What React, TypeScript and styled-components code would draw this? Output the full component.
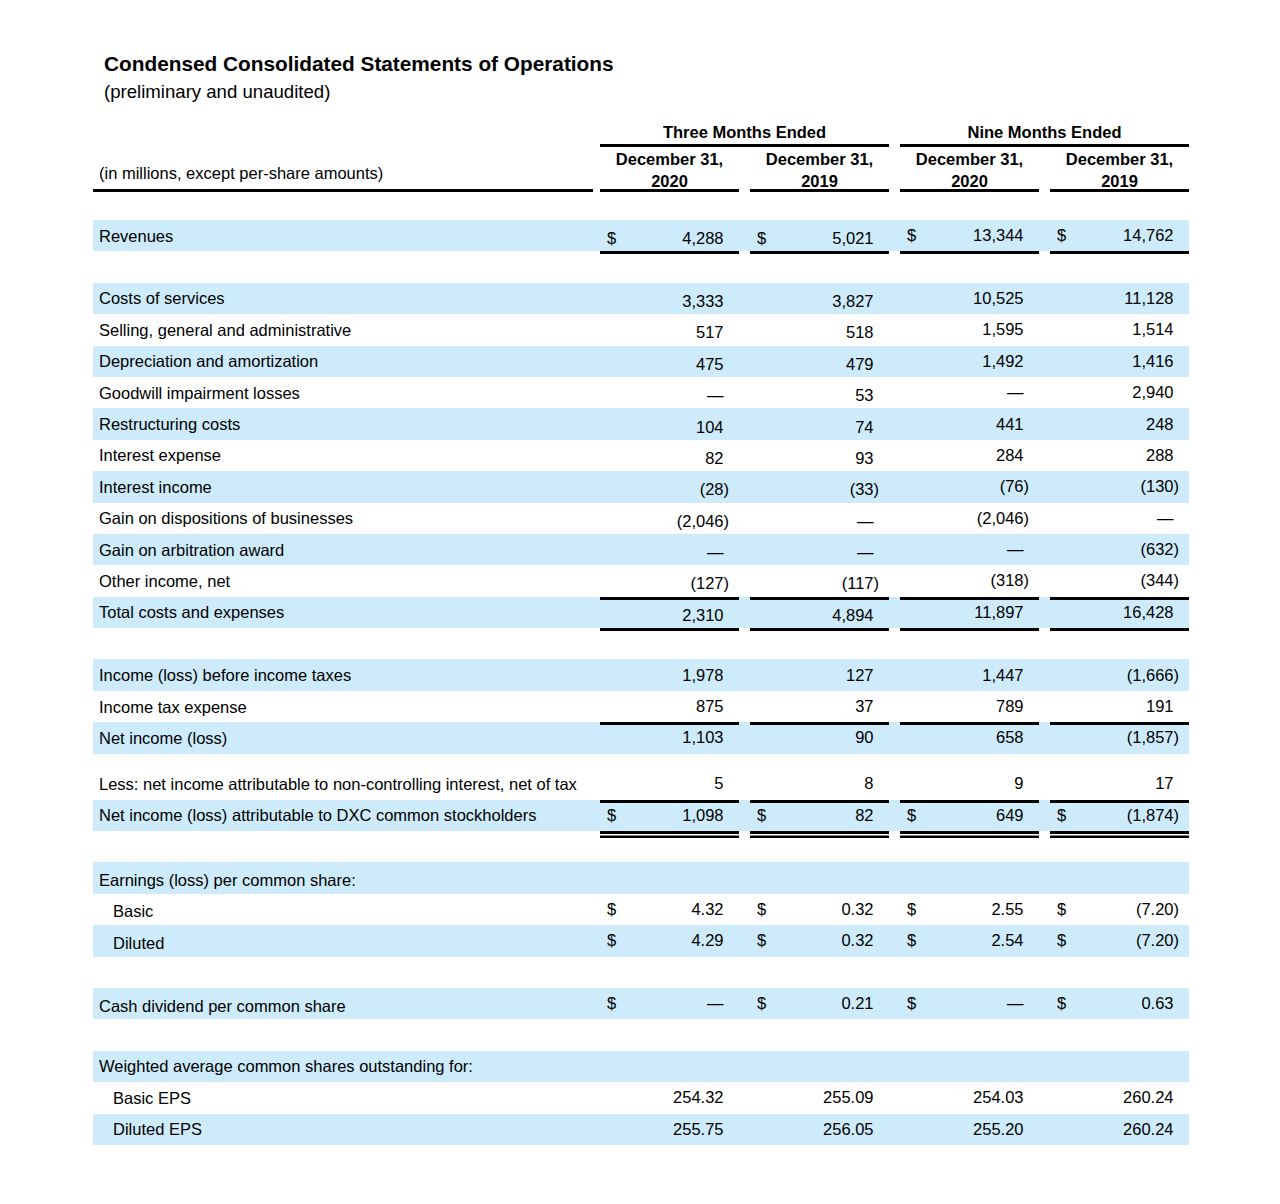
import React from 'react';
import styled, { createGlobalStyle, css } from 'styled-components';

const GlobalStyle = createGlobalStyle`
  *, *::before, *::after { box-sizing: border-box; }
  html, body { margin: 0; padding: 0; background: #ffffff; }
  body {
    font-family: "Liberation Sans", Arial, Helvetica, sans-serif;
    color: #000000;
  }
`;

const COLS = '496px repeat(4, 139px)';
const BAND = '#cdebfa';

const Page = styled.div`
  width: 1280px;
  min-height: 1204px;
  padding: 52px 0 0 93px;
`;

const Title = styled.h1`
  margin: 0 0 0 11px;
  font-size: 20.8px;
  line-height: 24px;
  font-weight: 700;
`;

const Subtitle = styled.div`
  margin: 5px 0 0 11px;
  font-size: 18.6px;
  line-height: 22px;
`;

const Table = styled.div`
  width: 1096px;
  margin-top: 19px;
  font-size: 16.5px;
`;

const HeadRow = styled.div<{ $gap?: number }>`
  display: grid;
  grid-template-columns: ${COLS};
  column-gap: 11px;
  margin-top: ${(p) => p.$gap ?? 0}px;
`;

const GroupHead = styled.div`
  grid-column: span 2;
  text-align: center;
  font-weight: 700;
  line-height: 20px;
  padding-bottom: 2px;
  border-bottom: 3px solid #000;
`;

const DateHead = styled.div`
  box-sizing: content-box;
  height: 41px;
  line-height: 22px;
  text-align: center;
  font-weight: 700;
  border-bottom: 3px solid #000;
`;

const UnitsHead = styled.div`
  box-sizing: content-box;
  height: 35px;
  margin-right: -4px;
  padding: 0 0 6px 6px;
  display: flex;
  align-items: flex-end;
  line-height: 20px;
  border-bottom: 3px solid #000;
`;

const Body = styled.div`
  margin-top: 28px;
`;

const Row = styled.div<{ $band?: boolean }>`
  display: grid;
  grid-template-columns: ${COLS};
  column-gap: 11px;
  height: 31.4px;
  line-height: 19px;
  background: ${(p) => (p.$band ? BAND : 'transparent')};
`;

const Spacer = styled.div<{ $h: number }>`
  height: ${(p) => p.$h}px;
`;

const Label = styled.div<{ $indent?: boolean; $drop?: boolean }>`
  display: flex;
  align-items: center;
  white-space: nowrap;
  padding-left: ${(p) => (p.$indent ? 20 : 6)}px;
  padding-top: ${(p) => (p.$drop ? 5 : 1)}px;
`;

type Rule = 'single' | 'double';

const ruleShadow = (top?: boolean, bottom?: Rule) => {
  const parts: string[] = [];
  if (top) parts.push('inset 0 3px 0 #000');
  if (bottom === 'single') parts.push('0 3px 0 #000');
  if (bottom === 'double') parts.push('0 3px 0 #000', '0 4.5px 0 #fff', '0 7px 0 #000');
  return parts.length ? css`box-shadow: ${parts.join(', ')};` : '';
};

const Cell = styled.div<{ $drop?: boolean; $top?: boolean; $bottom?: Rule }>`
  display: flex;
  align-items: center;
  padding: ${(p) => (p.$drop ? 6 : 0)}px 10px 0 7px;
  white-space: nowrap;
  ${(p) => ruleShadow(p.$top, p.$bottom)}
`;

const Dollar = styled.span``;

const Amount = styled.span<{ $paren: boolean }>`
  margin-left: auto;
  padding-right: ${(p) => (p.$paren ? 0 : 5.5)}px;
`;

type Line = {
  label: string;
  band?: boolean;
  indent?: boolean;
  v?: string[];
  dollar?: boolean;
  drop?: boolean;
  labelDrop?: boolean;
  top?: boolean;
  bottom?: Rule;
};

type Item = Line | { spacer: number };

const FULL = 31.4;

const items: Item[] = [
  { label: 'Revenues', band: true, v: ['4,288', '5,021', '13,344', '14,762'], dollar: true, drop: true, bottom: 'single' },
  { spacer: FULL },
  { label: 'Costs of services', band: true, v: ['3,333', '3,827', '10,525', '11,128'], drop: true },
  { label: 'Selling, general and administrative', v: ['517', '518', '1,595', '1,514'], drop: true },
  { label: 'Depreciation and amortization', band: true, v: ['475', '479', '1,492', '1,416'], drop: true },
  { label: 'Goodwill impairment losses', v: ['—', '53', '—', '2,940'], drop: true },
  { label: 'Restructuring costs', band: true, v: ['104', '74', '441', '248'], drop: true },
  { label: 'Interest expense', v: ['82', '93', '284', '288'], drop: true },
  { label: 'Interest income', band: true, v: ['(28)', '(33)', '(76)', '(130)'], drop: true },
  { label: 'Gain on dispositions of businesses', v: ['(2,046)', '—', '(2,046)', '—'], drop: true },
  { label: 'Gain on arbitration award', band: true, v: ['—', '—', '—', '(632)'], drop: true },
  { label: 'Other income, net', v: ['(127)', '(117)', '(318)', '(344)'], drop: true },
  { label: 'Total costs and expenses', band: true, v: ['2,310', '4,894', '11,897', '16,428'], drop: true, top: true, bottom: 'single' },
  { spacer: FULL },
  { label: 'Income (loss) before income taxes', band: true, v: ['1,978', '127', '1,447', '(1,666)'] },
  { label: 'Income tax expense', v: ['875', '37', '789', '191'] },
  { label: 'Net income (loss)', band: true, v: ['1,103', '90', '658', '(1,857)'], top: true },
  { spacer: 14.6 },
  { label: 'Less: net income attributable to non-controlling interest, net of tax', v: ['5', '8', '9', '17'] },
  { label: 'Net income (loss) attributable to DXC common stockholders', band: true, v: ['1,098', '82', '649', '(1,874)'], dollar: true, top: true, bottom: 'double' },
  { spacer: FULL },
  { label: 'Earnings (loss) per common share:', band: true, labelDrop: true },
  { label: 'Basic', indent: true, v: ['4.32', '0.32', '2.55', '(7.20)'], dollar: true, labelDrop: true },
  { label: 'Diluted', indent: true, band: true, v: ['4.29', '0.32', '2.54', '(7.20)'], dollar: true, labelDrop: true },
  { spacer: FULL },
  { label: 'Cash dividend per common share', band: true, v: ['—', '0.21', '—', '0.63'], dollar: true, labelDrop: true },
  { spacer: FULL },
  { label: 'Weighted average common shares outstanding for:', band: true },
  { label: 'Basic EPS', indent: true, v: ['254.32', '255.09', '254.03', '260.24'] },
  { label: 'Diluted EPS', indent: true, band: true, v: ['255.75', '256.05', '255.20', '260.24'] },
];

const StatementRow: React.FC<{ line: Line }> = ({ line }) => (
  <Row $band={line.band}>
    <Label $indent={line.indent} $drop={line.labelDrop}>{line.label}</Label>
    {line.v
      ? line.v.map((val, i) => (
          <Cell key={i} $drop={line.drop && i < 2} $top={line.top} $bottom={line.bottom}>
            {line.dollar && <Dollar>$</Dollar>}
            <Amount $paren={val.endsWith(')')}>{val}</Amount>
          </Cell>
        ))
      : null}
  </Row>
);

export default function App() {
  return (
    <>
      <GlobalStyle />
      <Page>
        <Title>Condensed Consolidated Statements of Operations</Title>
        <Subtitle>(preliminary and unaudited)</Subtitle>
        <Table>
          <HeadRow>
            <div />
            <GroupHead>Three Months Ended</GroupHead>
            <GroupHead>Nine Months Ended</GroupHead>
          </HeadRow>
          <HeadRow $gap={1}>
            <UnitsHead>(in millions, except per-share amounts)</UnitsHead>
            <DateHead>December 31,<br />2020</DateHead>
            <DateHead>December 31,<br />2019</DateHead>
            <DateHead>December 31,<br />2020</DateHead>
            <DateHead>December 31,<br />2019</DateHead>
          </HeadRow>
          <Body>
            {items.map((it, idx) =>
              'spacer' in it ? <Spacer key={idx} $h={it.spacer} /> : <StatementRow key={idx} line={it} />
            )}
          </Body>
        </Table>
      </Page>
    </>
  );
}
